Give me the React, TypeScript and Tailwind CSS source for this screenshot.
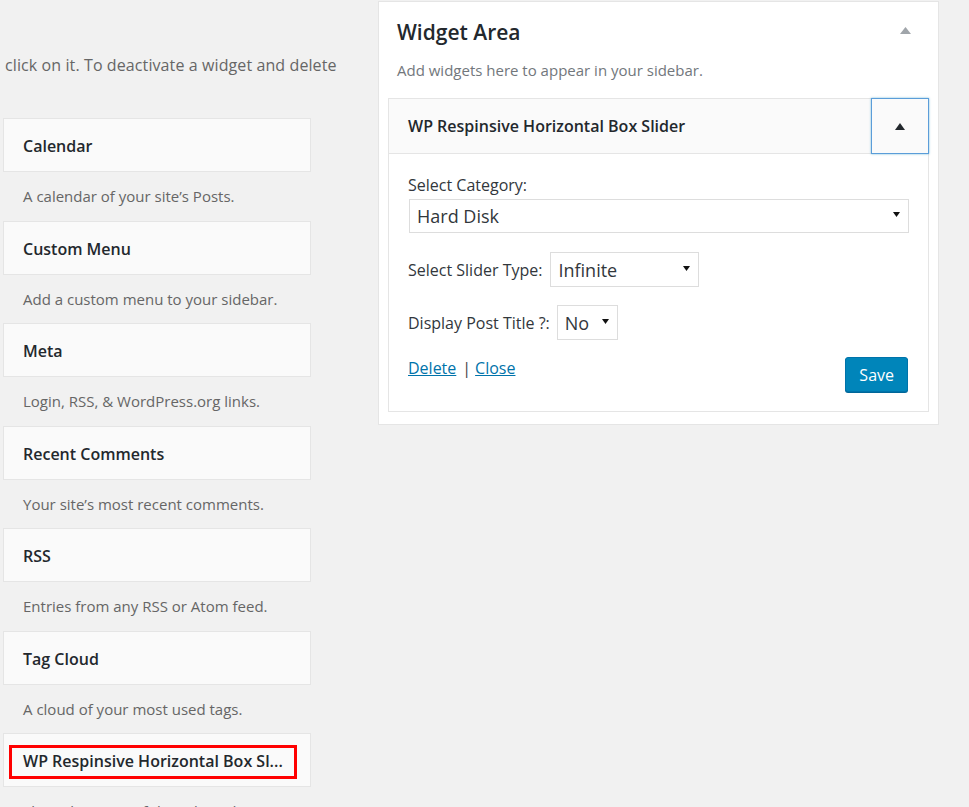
import React from 'react'

interface Widget {
  title: string
  desc: string
  marked?: boolean
}

const widgets: Widget[] = [
  { title: 'Calendar', desc: 'A calendar of your site’s Posts.' },
  { title: 'Custom Menu', desc: 'Add a custom menu to your sidebar.' },
  { title: 'Meta', desc: 'Login, RSS, & WordPress.org links.' },
  { title: 'Recent Comments', desc: 'Your site’s most recent comments.' },
  { title: 'RSS', desc: 'Entries from any RSS or Atom feed.' },
  { title: 'Tag Cloud', desc: 'A cloud of your most used tags.' },
  { title: 'WP Respinsive Horizontal Box Sl...', desc: 'Show the posts of the selected category', marked: true },
]

function Caret({ className }: { className?: string }) {
  return (
    <svg width="7" height="5" viewBox="0 0 7 5" className={className}>
      <path d="M0 0h7L3.5 5z" fill="#111" />
    </svg>
  )
}

function FakeSelect({ value, width, height = 'h-[35px]' }: { value: string; width: string; height?: string }) {
  return (
    <div className={`flex items-center justify-between ${height} border border-[#ddd] bg-white pl-[7px] pr-[8px] ${width}`}>
      <span className="text-[18px] text-[#32373c] leading-none">{value}</span>
      <Caret className="-mt-[3px]" />
    </div>
  )
}

export default function App() {
  return (
    <div className="min-h-screen bg-[#f1f1f1] flex font-['Open_Sans',sans-serif] overflow-hidden">
      {/* Available widgets */}
      <div className="w-[308px] ml-[3px] shrink-0">
        <p className="mt-[54px] ml-[2px] text-[16px] tracking-[0.1px] leading-[22px] text-[#666] whitespace-nowrap">
          click on it. To deactivate a widget and delete
        </p>

        <div className="mt-[42px]">
          {widgets.map((w) => (
            <div key={w.title}>
              <div className="relative h-[54px] bg-[#fafafa] border border-[#e5e5e5] flex items-center px-[19px] pt-[2px]">
                <h3 className="text-[16px] font-semibold text-[#23282d] whitespace-nowrap">{w.title}</h3>
                {w.marked && (
                  <div className="absolute left-[5px] top-[11px] w-[288px] h-[34px] border-[3px] border-[#f00]" />
                )}
              </div>
              <p className="h-[48.5px] pl-[20px] flex items-center text-[15px] text-[#666] whitespace-nowrap">
                {w.desc}
              </p>
            </div>
          ))}
        </div>
      </div>

      {/* Widget area */}
      <div className="ml-[67px] mt-[1px] w-[561px] h-[424px] shrink-0 bg-white border border-[#e5e5e5] px-[9px] pt-[16px]">
        <div className="flex items-start justify-between pl-[9px] pr-[18px]">
          <h2 className="text-[21px] leading-[28px] font-semibold text-[#23282d]">Widget Area</h2>
          <svg width="11" height="7" viewBox="0 0 11 7" className="mt-[9px]">
            <path d="M5.5 0L11 7H0z" fill="#a0a5aa" />
          </svg>
        </div>
        <p className="pl-[9px] mt-[13px] text-[15px] leading-[22px] text-[#72777c]">
          Add widgets here to appear in your sidebar.
        </p>

        <div className="mt-[17px] border border-[#e5e5e5] bg-white">
          <div className="flex h-[55px] bg-[#fafafa] border-b border-[#e5e5e5]">
            <div className="flex-1 flex items-center pl-[19px]">
              <h3 className="text-[16px] font-semibold text-[#23282d]">WP Respinsive Horizontal Box Slider</h3>
            </div>
            <button className="w-[58px] h-[56px] -mt-px -mr-px border border-[#5b9dd9] shadow-[0_0_2px_rgba(30,140,190,0.6)] flex items-center justify-center">
              <svg width="10" height="7" viewBox="0 0 10 7">
                <path d="M5 0L10 7H0z" fill="#23282d" />
              </svg>
            </button>
          </div>

          <div className="pl-[19px] pr-[18px] pt-[20px] pb-[19px] text-[16px] text-[#32373c]">
            <label className="block leading-[22px]">Select Category:</label>
            <div className="mt-[3px] ml-px">
              <FakeSelect value="Hard Disk" width="w-[500px]" height="h-[34px]" />
            </div>

            <div className="mt-[19px] flex items-center gap-[8px]">
              <label className="leading-[22px]">Select Slider Type:</label>
              <FakeSelect value="Infinite" width="w-[149px]" />
            </div>

            <div className="mt-[18px] flex items-center gap-[7px]">
              <label className="leading-[22px]">Display Post Title ?:</label>
              <FakeSelect value="No" width="w-[61px]" />
            </div>

            <div className="mt-[17px] flex items-start justify-between">
              <div className="leading-[22px] text-[16px]">
                <a className="text-[#0073aa] underline cursor-pointer">Delete</a>
                <span className="ml-[6px] mr-[4px] text-[#444]">|</span>
                <a className="text-[#0073aa] underline cursor-pointer">Close</a>
              </div>
              <button className="mr-[2px] h-[35px] px-[13px] bg-[#0085ba] border border-[#0073aa] rounded-[3px] text-white text-[16px] shadow-[0_1px_0_#006799]">
                Save
              </button>
            </div>
          </div>
        </div>
      </div>
    </div>
  )
}
